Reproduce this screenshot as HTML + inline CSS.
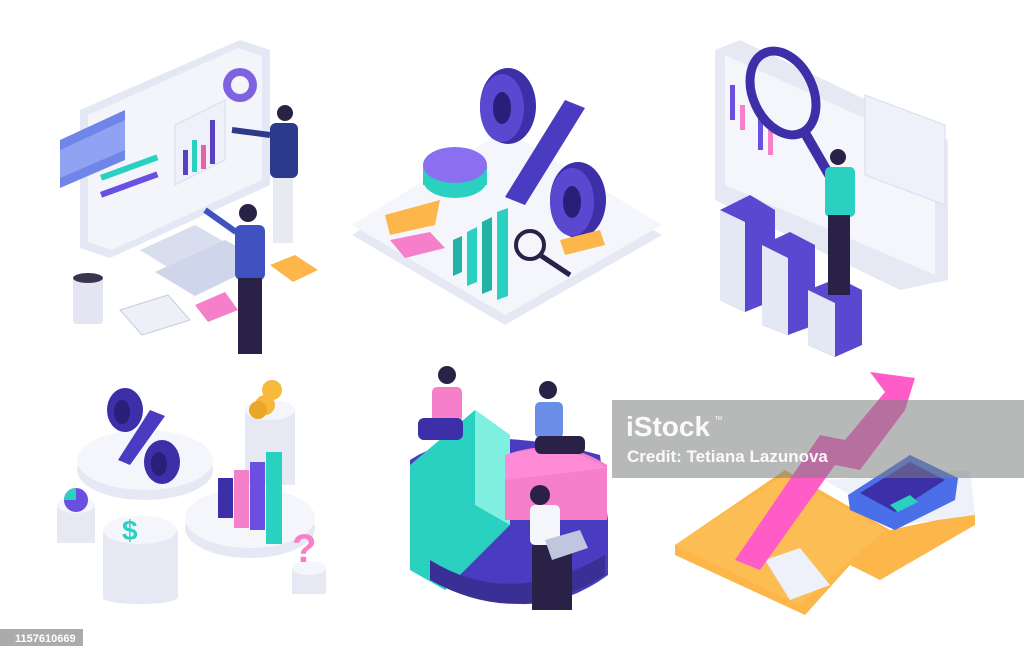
<!DOCTYPE html>
<html><head><meta charset="utf-8"><style>
html,body{margin:0;padding:0;background:#fff;width:1024px;height:658px;overflow:hidden}
svg{display:block}
.t{font-family:"Liberation Sans",sans-serif}
</style></head><body>
<svg width="1024" height="658" viewBox="0 0 1024 658" xmlns="http://www.w3.org/2000/svg">
<rect width="1024" height="658" fill="#fff"/>
<!-- Scene 1: monitor -->
<polygon points="80,110 240,40 270,50 270,185 110,258 80,248" fill="#e4e8f4"/>
<polygon points="88,115 238,48 262,56 262,180 112,250 88,242" fill="#f3f5fb"/>
<polygon points="60,140 125,110 125,160 60,188" fill="#6f86e8"/>
<polygon points="60,150 125,120 125,150 60,178" fill="#8fa3f2"/>
<polygon points="175,125 225,100 225,160 175,185" fill="#eef1f9" stroke="#d8dcef"/>
<rect x="183" y="150" width="5" height="25" fill="#5a3fc0"/><rect x="192" y="140" width="5" height="32" fill="#2ad1c0"/><rect x="201" y="145" width="5" height="24" fill="#ea5fa8"/><rect x="210" y="120" width="5" height="44" fill="#5a3fc0"/>
<circle cx="240" cy="85" r="17" fill="#7f62e0"/><circle cx="240" cy="85" r="9" fill="#f3f5fb"/>
<rect x="100" y="175" width="60" height="6" fill="#2ad1c0" transform="rotate(-20 100 175)"/>
<rect x="100" y="192" width="60" height="6" fill="#6a4fe0" transform="rotate(-20 100 192)"/>
<polygon points="140,250 195,225 230,245 175,272" fill="#d9deee"/>
<polygon points="155,272 225,240 265,262 195,296" fill="#cfd5ea"/>
<polygon points="270,265 295,255 318,270 293,282" fill="#fdb64a"/>
<polygon points="195,305 225,292 238,310 208,322" fill="#f57fc8"/>
<rect x="73" y="276" width="30" height="48" rx="4" fill="#e3e6f2"/><ellipse cx="88" cy="278" rx="15" ry="5" fill="#3b3550"/>
<polygon points="120,310 168,295 190,320 142,335" fill="#eef0f8" stroke="#c7cce0"/>
<!-- people s1 -->
<circle cx="285" cy="113" r="8" fill="#2a2246"/><rect x="270" y="123" width="28" height="55" rx="6" fill="#2c3a8c"/><rect x="273" y="178" width="20" height="65" fill="#e8eaf2"/>
<line x1="270" y1="135" x2="232" y2="130" stroke="#2c3a8c" stroke-width="6"/>
<circle cx="248" cy="213" r="9" fill="#2a2246"/><rect x="235" y="225" width="30" height="55" rx="6" fill="#4052c0"/><rect x="238" y="278" width="24" height="76" fill="#2a2246"/>
<line x1="236" y1="232" x2="205" y2="210" stroke="#4052c0" stroke-width="6"/>
<!-- Scene 2: platform -->
<polygon points="352,235 505,140 662,235 505,325" fill="#e6e9f4"/>
<polygon points="352,225 505,130 662,225 505,315" fill="#f4f6fb"/>
<polygon points="385,215 440,200 435,225 390,235" fill="#fdb64a"/>
<polygon points="390,240 430,232 445,248 405,258" fill="#f57fc8"/>
<ellipse cx="455" cy="180" rx="32" ry="18" fill="#2ad1c0"/><path d="M423,165 L455,150 455,180 Z" fill="#6a4fe0"/><path d="M455,150 A32,18 0 0 1 487,170 L455,180Z" fill="#f57fc8"/><rect x="423" y="165" width="64" height="20" fill="#2ad1c0"/><ellipse cx="455" cy="165" rx="32" ry="18" fill="#8a70f0"/>
<ellipse cx="508" cy="106" rx="28" ry="38" fill="#3c2fa8"/><ellipse cx="502" cy="108" rx="22" ry="34" fill="#5a48d0"/><ellipse cx="502" cy="108" rx="9" ry="16" fill="#2a1f78"/>
<polygon points="565,100 585,108 525,205 505,197" fill="#4a3cc0"/>
<ellipse cx="578" cy="200" rx="28" ry="38" fill="#3c2fa8"/><ellipse cx="572" cy="202" rx="22" ry="34" fill="#5a48d0"/><ellipse cx="572" cy="202" rx="9" ry="16" fill="#2a1f78"/>
<polygon points="453,240 462,236 462,272 453,276" fill="#23b3a6"/><polygon points="467,232 477,227 477,282 467,286" fill="#2ad1c0"/><polygon points="482,222 492,217 492,290 482,294" fill="#23b3a6"/><polygon points="497,212 508,208 508,296 497,300" fill="#2ad1c0"/>
<circle cx="530" cy="245" r="14" fill="none" stroke="#2a2246" stroke-width="4"/><line x1="540" y1="255" x2="570" y2="275" stroke="#2a2246" stroke-width="5"/>
<polygon points="560,240 600,230 605,245 565,255" fill="#fdb64a"/>
<!-- Scene 3 -->
<polygon points="740,40 930,130 948,140 948,280 900,290 715,200 715,50" fill="#e6e9f4"/>
<polygon points="725,55 935,150 935,275 725,185" fill="#f4f6fb"/>
<rect x="730" y="85" width="5" height="35" fill="#6a4fe0"/><rect x="740" y="105" width="5" height="25" fill="#f57fc8"/><rect x="758" y="110" width="5" height="40" fill="#6a4fe0"/><rect x="768" y="130" width="5" height="25" fill="#f57fc8"/>
<polygon points="865,95 945,125 945,205 865,175" fill="#eef1f9" stroke="#d8dcef"/>
<ellipse cx="783" cy="93" rx="30" ry="44" fill="none" stroke="#3c2fa8" stroke-width="9" transform="rotate(-25 783 93)"/><line x1="805" y1="133" x2="835" y2="185" stroke="#3c2fa8" stroke-width="10"/>
<polygon points="720,210 750,195 775,210 775,300 745,312 720,300" fill="#5a48d0"/><polygon points="720,210 745,222 745,312 720,300" fill="#e4e8f4"/>
<polygon points="762,245 790,232 815,245 815,325 788,335 762,325" fill="#5a48d0"/><polygon points="762,245 788,258 788,335 762,325" fill="#e4e8f4"/>
<polygon points="808,290 838,278 862,290 862,345 835,357 808,345" fill="#5a48d0"/><polygon points="808,290 835,303 835,357 808,345" fill="#e4e8f4"/>
<circle cx="838" cy="157" r="8" fill="#2a2246"/><rect x="825" y="167" width="30" height="50" rx="5" fill="#2ad1c0"/><rect x="828" y="215" width="22" height="80" fill="#2a2246"/>
<!-- Scene 4 -->
<ellipse cx="145" cy="470" rx="68" ry="30" fill="#e6e9f4"/><ellipse cx="145" cy="460" rx="68" ry="30" fill="#f4f6fb"/>
<ellipse cx="125" cy="410" rx="18" ry="22" fill="#3c2fa8"/><ellipse cx="122" cy="412" rx="8" ry="12" fill="#2a1f78"/>
<polygon points="150,410 165,416 130,465 118,460" fill="#4a3cc0"/>
<ellipse cx="162" cy="462" rx="18" ry="22" fill="#3c2fa8"/><ellipse cx="159" cy="464" rx="8" ry="12" fill="#2a1f78"/>
<ellipse cx="250" cy="528" rx="65" ry="30" fill="#e6e9f4"/><ellipse cx="250" cy="518" rx="65" ry="30" fill="#f4f6fb"/>
<rect x="245" y="410" width="50" height="75" fill="#e6e9f4"/><ellipse cx="270" cy="410" rx="25" ry="10" fill="#f4f6fb"/>
<circle cx="265" cy="405" r="10" fill="#f6b93b"/><circle cx="272" cy="390" r="10" fill="#f6b93b"/><circle cx="258" cy="410" r="9" fill="#e9a628"/>
<rect x="218" y="478" width="15" height="40" fill="#3c2fa8"/><rect x="234" y="470" width="15" height="58" fill="#f57fc8"/><rect x="250" y="462" width="15" height="68" fill="#6a4fe0"/><rect x="266" y="452" width="16" height="92" fill="#2ad1c0"/>
<rect x="103" y="530" width="75" height="68" fill="#e6e9f4"/><ellipse cx="140" cy="598" rx="37" ry="6" fill="#e6e9f4"/><ellipse cx="140" cy="530" rx="37" ry="14" fill="#f4f6fb"/>
<text x="122" y="540" class="t" font-size="28" font-weight="bold" fill="#2ad1c0">$</text>
<rect x="57" y="505" width="38" height="38" fill="#e6e9f4"/><ellipse cx="76" cy="505" rx="19" ry="8" fill="#f4f6fb"/><circle cx="76" cy="500" r="12" fill="#6a4fe0"/><path d="M76,500 L64,500 A12,12 0 0 1 76,488Z" fill="#2ad1c0"/>
<rect x="292" y="568" width="34" height="26" fill="#e6e9f4"/><ellipse cx="309" cy="568" rx="17" ry="7" fill="#f4f6fb"/>
<text x="292" y="562" class="t" font-size="40" font-weight="bold" fill="#f57fc8">?</text>
<!-- Scene 5: pie -->
<path d="M410,560 L410,460 Q470,420 600,455 L608,520 L608,575 Q520,640 410,560Z" fill="#4a3cc0"/>
<polygon points="410,465 475,410 510,435 510,525 445,590 410,570" fill="#2ad1c0"/>
<polygon points="475,410 510,435 510,525 475,505" fill="#7ff0e0"/>
<path d="M505,455 Q560,435 607,465 L607,520 L505,520Z" fill="#f57fc8"/>
<path d="M505,455 Q560,440 607,468 L505,480Z" fill="#ff8ad6"/>
<path d="M430,560 Q510,610 605,555 L605,575 Q520,630 430,580Z" fill="#3a2f95"/>
<circle cx="447" cy="375" r="9" fill="#2a2246"/><rect x="432" y="387" width="30" height="35" rx="5" fill="#f57fc8"/><rect x="418" y="418" width="45" height="22" rx="6" fill="#3c2fa8"/>
<circle cx="548" cy="390" r="9" fill="#2a2246"/><rect x="535" y="402" width="28" height="36" rx="5" fill="#6a8de8"/><rect x="535" y="436" width="50" height="18" rx="6" fill="#2a2246"/>
<circle cx="540" cy="495" r="10" fill="#2a2246"/><rect x="530" y="505" width="30" height="40" rx="5" fill="#f4f6fb"/><rect x="532" y="545" width="40" height="65" fill="#2a2246"/><polygon points="545,540 580,530 588,548 552,560" fill="#c0c6de"/>
<!-- Scene 6 -->
<polygon points="675,545 785,470 890,530 975,512 975,525 880,580 850,565 805,615 675,555" fill="#fdb64a"/>
<polygon points="675,545 785,475 885,530 800,605" fill="#fcbd55"/>
<polygon points="765,560 800,548 830,585 790,600" fill="#eef1f9"/>
<polygon points="735,560 760,570 835,465 860,470 905,410 915,378 870,372 885,392 845,440 820,435" fill="#ff5cc8"/>
<polygon points="825,480 970,470 975,515 900,525" fill="#eef1f9"/>
<polygon points="848,495 910,455 958,478 955,500 895,530 850,510" fill="#4a6fe8"/>
<polygon points="860,493 910,462 945,480 895,512" fill="#3c2fa8"/>
<polygon points="890,505 910,495 918,502 898,512" fill="#2ad1c0"/>
<!-- watermark -->
<rect x="612" y="400" width="412" height="78" fill="#7b7f80" fill-opacity="0.55"/>
<text x="626" y="436" class="t" font-size="28" font-weight="bold" fill="#fff" fill-opacity="0.92">iStock</text>
<text x="715" y="420" class="t" font-size="5" fill="#fff">TM</text>
<text x="627" y="462" class="t" font-size="17" font-weight="bold" fill="#fff" fill-opacity="0.92">Credit: Tetiana Lazunova</text>
<rect x="0" y="629" width="83" height="17" fill="#a9abad"/>
<text x="15" y="642" class="t" font-size="11" font-weight="bold" fill="#fff">1157610669</text>
</svg>
</body></html>
